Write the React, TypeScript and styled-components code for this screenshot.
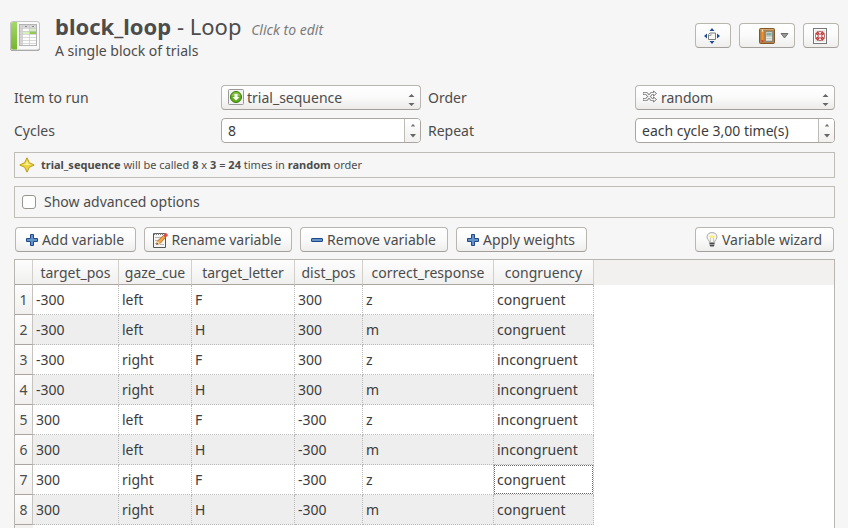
import React, { useState } from "react";
import styled, { createGlobalStyle } from "styled-components";

const GlobalStyle = createGlobalStyle`
  * { box-sizing: border-box; }
  body {
    margin: 0;
    background: #f6f6f6;
    color: #4c4c4c;
    font-family: "Noto Sans", "Open Sans", sans-serif;
    font-size: 14px;
    line-height: 20px;
  }
  button, input, select { font: inherit; color: inherit; margin: 0; }
`;

const Page = styled.main`
  display: flex;
  flex-direction: column;
  min-height: 100vh;
`;

const Header = styled.header`
  display: flex;
  align-items: flex-start;
  height: 85px;
  padding: 14px 9px 0;
`;

const AppIcon = styled.svg`
  flex: none;
  margin: 5px 14px 0 0;
`;

const Heading = styled.div`
  flex: 1;
  min-width: 0;
`;

const Title = styled.h1`
  margin: 0;
  font-size: 22px;
  line-height: 25px;
  font-weight: 400;
  white-space: nowrap;
`;

const EditHint = styled.em`
  margin-left: 4px;
  font-size: 14px;
  color: #7c7c7c;
`;

const Subtitle = styled.p`
  margin: 0;
  line-height: 18px;
`;

const HeaderTools = styled.div`
  display: flex;
  gap: 8px;
  padding-top: 9px;
`;

const Button = styled.button<{ $min?: number }>`
  display: flex;
  align-items: center;
  justify-content: center;
  gap: 3px;
  height: 25px;
  min-width: ${(p) => p.$min ?? 36}px;
  padding: 0 5px 0 3px;
  border: 1px solid #b9b5b0;
  border-bottom-color: #a39f9a;
  border-radius: 4px;
  background: linear-gradient(#ffffff, #fafafa 50%, #efeeed);
  white-space: nowrap;
  svg { flex: none; }
`;

const ToolButton = styled(Button)`
  gap: 5px;
  padding: 0 5px 0 18px;
`;

const Content = styled.div`
  flex: 1;
  display: flex;
  flex-direction: column;
  padding: 0 13px 0 14px;
`;

const Form = styled.form`
  display: grid;
  grid-template-columns: repeat(4, 1fr);
  gap: 8px 7px;
  align-items: center;
`;

const SelectBox = styled.div`
  position: relative;
  display: flex;
  height: 25px;
  border: 1px solid #b9b5b0;
  border-bottom-color: #a39f9a;
  border-radius: 4px;
  background: linear-gradient(#ffffff, #fafafa 50%, #ecebea);
  svg { position: absolute; pointer-events: none; }
  svg:first-child { left: 6px; top: 3px; }
  svg:last-child { right: 5px; top: 7px; }
`;

const Select = styled.select`
  flex: 1;
  min-width: 0;
  padding: 0 20px 0 25px;
  border: 0;
  appearance: none;
  background: transparent;
`;

const SpinBox = styled.div`
  display: flex;
  height: 25px;
  border: 1px solid #aaa69f;
  border-radius: 4px;
  overflow: hidden;
  background: #fff;
`;

const SpinInput = styled.input`
  flex: 1;
  min-width: 0;
  padding: 0 6px;
  border: 0;
  background: transparent;
  color: #3c3c3c;
`;

const SpinButtons = styled.div`
  display: flex;
  flex-direction: column;
  width: 16px;
  border-left: 1px solid #bfbbb6;
  background: linear-gradient(#ffffff, #f1f0ef);
`;

const SpinButton = styled.button`
  flex: 1;
  display: flex;
  align-items: center;
  justify-content: center;
  padding: 0;
  border: 0;
  background: transparent;
`;

const Summary = styled.p`
  display: flex;
  align-items: center;
  gap: 6px;
  height: 26px;
  margin: 9px 0 0;
  padding: 0 4px;
  border: 1px solid #c0bcb6;
  font-size: 11px;
`;

const Options = styled.label`
  display: flex;
  align-items: center;
  gap: 8px;
  height: 32px;
  margin-top: 8px;
  padding: 0 7px;
  border: 1px solid #c0bcb6;
`;

const CheckBox = styled.input`
  appearance: none;
  width: 14px;
  height: 14px;
  border: 1px solid #98948e;
  border-radius: 3px;
  background: #fff;
  &:checked { background: #777; }
`;

const Toolbar = styled.div`
  display: flex;
  gap: 8px;
  padding: 9px 1px 7px;
  > :last-child { margin-left: auto; }
`;

const TableFrame = styled.div`
  flex: 1;
  border: 1px solid #b9b5b0;
  border-bottom: 0;
  background: linear-gradient(#f2f1f0, #f2f1f0) 0 0 / 100% 25px no-repeat,
    linear-gradient(#f2f1f0, #f2f1f0) 0 0 / 18px 100% no-repeat, #fff;
`;

const Table = styled.table`
  width: 579px;
  table-layout: fixed;
  border-collapse: separate;
  border-spacing: 0;
`;

const Col = styled.col<{ $w: number }>`
  width: ${(p) => p.$w}px;
`;

const ColumnHead = styled.th`
  height: 25px;
  padding: 2px 0 0;
  border-right: 1px solid #d3d0cc;
  border-bottom: 1px solid #aaa69f;
  background: linear-gradient(#fdfdfd, #f1f0ef);
  font-weight: 400;
  text-align: center;
`;

const RowHead = styled.th`
  height: 30px;
  padding: 0;
  border-right: 1px solid #c6c2bd;
  border-bottom: 1px solid #aaa69f;
  background: linear-gradient(#fdfdfd, #f1f0ef);
  font-weight: 400;
`;

const Row = styled.tr`
  background: #fff;
  &:nth-child(even) { background: #eeeeee; }
`;

const Cell = styled.td`
  padding: 0 0 0 3px;
  border-right: 1px dotted #bababa;
  border-bottom: 1px dotted #bababa;
  color: #3c3c3c;
`;

const CurrentCell = styled(Cell)`
  padding: 0;
`;

const FocusFrame = styled.span`
  display: block;
  height: 29px;
  padding-left: 2px;
  border: 1px dotted #666;
  line-height: 27px;
`;

const LoopIcon = () => (
  <AppIcon width="32" height="34" viewBox="0 0 32 34" aria-hidden="true">
    <defs>
      <linearGradient id="green" x1="0" y1="0" x2="0" y2="1">
        <stop offset="0" stopColor="#a4d86a" />
        <stop offset="1" stopColor="#76b52c" />
      </linearGradient>
    </defs>
    <rect x="1" y="3" width="30" height="29" rx="3" fill="#8e8e8e" />
    <rect x="1.500" y="2.500" width="29" height="28.500" rx="2.500" fill="#fafafa" stroke="#c4c4c4" />
    <path d="M2 5q0-2 2-2h4v27.500H4q-2 0-2-2z" fill="url(#green)" />
    <rect x="10.500" y="5.500" width="17" height="21" fill="#fdfdfd" stroke="#b4b4b4" />
    <path d="M11 6h16v3H11zM11 9h2.500v17H11z" fill="#d6d6d6" />
    <path d="M20.500 9H27v3h-6.500zM13.500 12h7v3h-7z" fill="#d7efbd" />
    <path d="M20.500 12H27v3h-6.500z" fill="#8fcb50" />
    <path d="M11 9.500h16M11 12.500h16M11 15.500h16M11 18.500h16M11 21.500h16M11 24.500h16M13.500 6v20M20.500 6v20" stroke="#c9c9c9" fill="none" strokeWidth=".7" />
    <path d="M16 7.500h2M23 7.500h2" stroke="#8a8a8a" />
  </AppIcon>
);

const CenterIcon = () => (
  <svg width="16" height="16" viewBox="0 0 16 16" aria-hidden="true">
    <path d="M8 0l2.500 3h-5zM8 16l2.500-3h-5zM0 8l3-2.500v5zM16 8l-3-2.500v5z" fill="#1f4b94" />
    <path d="M4.500 6.500l1.500-1.500h5.500v6.500h-7z" fill="#f8f8f5" stroke="#7d7f7b" />
    <path d="M5 7.500h2v-2" stroke="#a5a6a2" fill="none" />
  </svg>
);

const CalculatorIcon = () => (
  <svg width="16" height="16" viewBox="0 0 16 16" aria-hidden="true">
    <rect x=".5" y=".5" width="15" height="15" rx="1" fill="#b08146" stroke="#80572a" />
    <path d="M1.500 1.500h13" stroke="#d0aa72" />
    <path d="M2.500 3.500L3.500 1l1 2.500V14h-2z" fill="#f4902e" />
    <path d="M2.500 12h2v2h-2z" fill="#cf4430" />
    <path d="M2.500 3.500L3.500 1l1 2.500z" fill="#fff0c8" />
    <rect x="6.500" y="3.500" width="7" height="10" fill="#c9cbc4" stroke="#8b8c7e" />
    <path d="M7.500 5h5v2.500h-5z" fill="#84aea8" />
    <path d="M7.500 9.500h1m1 0h1m1 0h1M7.500 11.500h1m1 0h1m1 0h1" stroke="#fff" />
  </svg>
);

const HelpIcon = () => (
  <svg width="16" height="16" viewBox="0 0 16 16" aria-hidden="true">
    <rect x="1.500" y=".5" width="13" height="15" fill="#fff" stroke="#777" />
    <rect x="3" y="2" width="10" height="12" fill="#e9e9e9" />
    <circle cx="8" cy="8" r="3.300" fill="none" stroke="#fafafa" strokeWidth="2.400" />
    <path d="M5.100 3.800l2 2.100M10.900 3.800l-2 2.100M5.100 12.200l2-2.100M10.900 12.200l-2-2.100M3.800 5.100l2.100 2M12.200 5.100l-2.100 2M3.800 10.900l2.100-2M12.200 10.900l-2.100-2" stroke="#c92a2a" strokeWidth="1.400" />
    <circle cx="8" cy="8" r="4.600" fill="none" stroke="#b54444" strokeWidth=".8" />
    <circle cx="8" cy="8" r="1.900" fill="#f4f4f4" stroke="#b54444" strokeWidth=".8" />
  </svg>
);

const DropArrow = () => (
  <svg width="9" height="6" viewBox="0 0 9 6" aria-hidden="true">
    <path d="M1 .5h7L4.500 5z" fill="#999" stroke="#6c6c6c" />
  </svg>
);

const SequenceIcon = () => (
  <svg width="16" height="16" viewBox="0 0 16 16" aria-hidden="true">
    <rect x=".5" y=".5" width="15" height="15" rx="1" fill="#f3f3f3" stroke="#999" />
    <circle cx="8" cy="8" r="5.500" fill="#62ae1c" stroke="#377808" />
    <path d="M3.500 7a4.600 4.600 0 0 1 9 0z" fill="#86c545" />
    <path d="M6.500 5h3v3h2L8 11.500 4.500 8h2z" fill="#fff" />
  </svg>
);

const ShuffleIcon = () => (
  <svg width="16" height="16" viewBox="0 0 16 16" aria-hidden="true">
    <g fill="none" strokeLinejoin="round">
      <path d="M1 4.500h3.500l5 6H12M1 10.500h3.500l5-6H12" stroke="#7b7b7b" strokeWidth="3" />
      <path d="M11.500 2l3 2.500-3 2.500zM11.500 8l3 2.500-3 2.500z" fill="#fff" stroke="#7b7b7b" />
      <path d="M1.500 4.500h3l5 6H12M1.500 10.500h3l5-6H12" stroke="#f4f4f4" strokeWidth="1.300" />
    </g>
  </svg>
);

const UpDownIcon = () => (
  <svg width="7" height="14" viewBox="0 0 7 14" aria-hidden="true">
    <path d="M0.500 4L3.500 1l3 3zM.5 10l3 3 3-3z" fill="#666" />
  </svg>
);

const StepIcon = ({ down = false }: { down?: boolean }) => (
  <svg width="6" height="4" viewBox="0 0 6 4" aria-hidden="true">
    <path d={down ? "M0 0h6L3 3.500z" : "M.8 3.500h4.400L3 .8z"} fill={down ? "#666" : "#777"} />
  </svg>
);

const StarIcon = () => (
  <svg width="16" height="16" viewBox="0 0 16 16" aria-hidden="true">
    <path d="M8 .8L10.300 5.700 15.200 8l-4.900 2.300L8 15.200 5.700 10.300.8 8l4.900-2.300z" fill="#ecd640" stroke="#bd9c12" strokeLinejoin="round" />
    <path d="M8 3.500L9.200 6.800 12 8H4l2.800-1.200z" fill="#faf09a" />
  </svg>
);

const PlusIcon = () => (
  <svg width="14" height="14" viewBox="0 0 14 14" aria-hidden="true">
    <path d="M5.500 1.500h3v4h4v3h-4v4h-3v-4h-4v-3h4z" fill="#6492ca" stroke="#204a87" strokeLinejoin="round" />
  </svg>
);

const MinusIcon = () => (
  <svg width="14" height="14" viewBox="0 0 14 14" aria-hidden="true">
    <rect x="1.500" y="5.500" width="11" height="3" rx=".5" fill="#6492ca" stroke="#204a87" />
  </svg>
);

const RenameIcon = () => (
  <svg width="16" height="16" viewBox="0 0 16 16" aria-hidden="true">
    <path d="M1.500 1.500h12v14h-12z" fill="#f5f5f5" stroke="#555" />
    <path d="M2 2h11" stroke="#777" strokeWidth="2" strokeDasharray="1 1" />
    <path d="M3 5.500h7M3 8.500h5M3 11.500h3M8 12.500h4" stroke="#b5b5b5" />
    <path d="M4.500 12.500l1-3.500 6-5.500 2 2L8 11.500z" fill="#f6a545" stroke="#a65d16" strokeWidth=".8" />
    <path d="M4.500 12.500l1-3.500L8 11.500z" fill="#f4dfb1" />
    <path d="M4.500 12.500l.5-1.700 1.300 1.200z" fill="#333" />
    <path d="M11.500 3.500l1.500-1.800q1-.9 2.200 0 1 1.100.3 2.200l-2 1.600z" fill="#e34b4b" />
  </svg>
);

const BulbIcon = () => (
  <svg width="14" height="16" viewBox="0 0 14 16" aria-hidden="true">
    <path d="M4.500 10.500q0-1.500-1.500-3Q2 6 2 4.800 2.400.7 7 .6q4.600.1 5 4.200 0 1.200-1 2.700-1.500 1.500-1.500 3z" fill="#f7f7ef" stroke="#aaa" />
    <path d="M3.500 4.500q3.500-2 7 0L8.500 6h-3z" fill="#f9ed82" />
    <path d="M5.500 6v4M8.500 6v4" stroke="#bbb" strokeWidth=".8" />
    <path d="M4.500 10.500h5v3l-1 1.500h-3l-1-1.500z" fill="#999" />
    <path d="M4.500 11.500h5M5 13.500h4" stroke="#4c4c4c" />
  </svg>
);

const columns = [
  { name: "target_pos", width: 86 },
  { name: "gaze_cue", width: 73 },
  { name: "target_letter", width: 103 },
  { name: "dist_pos", width: 68 },
  { name: "correct_response", width: 131 },
  { name: "congruency", width: 100 },
];

const rows = [
  ["-300", "left", "F", "300", "z", "congruent"],
  ["-300", "left", "H", "300", "m", "congruent"],
  ["-300", "right", "F", "300", "z", "incongruent"],
  ["-300", "right", "H", "300", "m", "incongruent"],
  ["300", "left", "F", "-300", "z", "incongruent"],
  ["300", "left", "H", "-300", "m", "incongruent"],
  ["300", "right", "F", "-300", "z", "congruent"],
  ["300", "right", "H", "-300", "m", "congruent"],
];

const current = { row: 6, column: 5 };

const Spin = ({ id, initial }: { id: string; initial: string }) => {
  const [value, setValue] = useState(initial);
  const step = (d: number) =>
    setValue((v) => v.replace(/\d+/, (n) => String(Math.max(0, Number(n) + d))));
  return (
    <SpinBox>
      <SpinInput id={id} type="text" value={value} onChange={(e) => setValue(e.target.value)} />
      <SpinButtons>
        <SpinButton type="button" aria-label="Increase" onClick={() => step(1)}>
          <StepIcon />
        </SpinButton>
        <SpinButton type="button" aria-label="Decrease" onClick={() => step(-1)}>
          <StepIcon down />
        </SpinButton>
      </SpinButtons>
    </SpinBox>
  );
};

export default function App() {
  return (
    <>
      <GlobalStyle />
      <Page>
        <Header>
          <LoopIcon />
          <Heading>
            <Title>
              <b>block_loop</b> - Loop <EditHint>Click to edit</EditHint>
            </Title>
            <Subtitle>A single block of trials</Subtitle>
          </Heading>
          <HeaderTools>
            <Button aria-label="Center view"><CenterIcon /></Button>
            <ToolButton $min={56} aria-label="View options"><CalculatorIcon /><DropArrow /></ToolButton>
            <Button aria-label="Help"><HelpIcon /></Button>
          </HeaderTools>
        </Header>
        <Content>
          <Form>
            <label htmlFor="item">Item to run</label>
            <SelectBox>
              <SequenceIcon />
              <Select id="item"><option>trial_sequence</option></Select>
              <UpDownIcon />
            </SelectBox>
            <label htmlFor="order">Order</label>
            <SelectBox>
              <ShuffleIcon />
              <Select id="order"><option>random</option><option>sequential</option></Select>
              <UpDownIcon />
            </SelectBox>
            <label htmlFor="cycles">Cycles</label>
            <Spin id="cycles" initial="8" />
            <label htmlFor="repeat">Repeat</label>
            <Spin id="repeat" initial="each cycle 3,00 time(s)" />
          </Form>
          <Summary>
            <StarIcon />
            <span>
              <b>trial_sequence</b> will be called <b>8</b> x <b>3</b> = <b>24</b> times in <b>random</b> order
            </span>
          </Summary>
          <Options>
            <CheckBox type="checkbox" />
            Show advanced options
          </Options>
          <Toolbar>
            <Button $min={121}><PlusIcon />Add variable</Button>
            <Button $min={148}><RenameIcon />Rename variable</Button>
            <Button $min={148}><MinusIcon />Remove variable</Button>
            <Button $min={131}><PlusIcon />Apply weights</Button>
            <Button $min={139}><BulbIcon />Variable wizard</Button>
          </Toolbar>
          <TableFrame>
            <Table>
              <colgroup>
                <Col $w={18} />
                {columns.map((c) => <Col key={c.name} $w={c.width} />)}
              </colgroup>
              <thead>
                <tr>
                  <ColumnHead />
                  {columns.map((c) => <ColumnHead key={c.name} scope="col">{c.name}</ColumnHead>)}
                </tr>
              </thead>
              <tbody>
                {rows.map((cells, r) => (
                  <Row key={r}>
                    <RowHead scope="row">{r + 1}</RowHead>
                    {cells.map((text, c) =>
                      r === current.row && c === current.column ? (
                        <CurrentCell key={c}><FocusFrame>{text}</FocusFrame></CurrentCell>
                      ) : (
                        <Cell key={c}>{text}</Cell>
                      )
                    )}
                  </Row>
                ))}
              </tbody>
            </Table>
          </TableFrame>
        </Content>
      </Page>
    </>
  );
}
